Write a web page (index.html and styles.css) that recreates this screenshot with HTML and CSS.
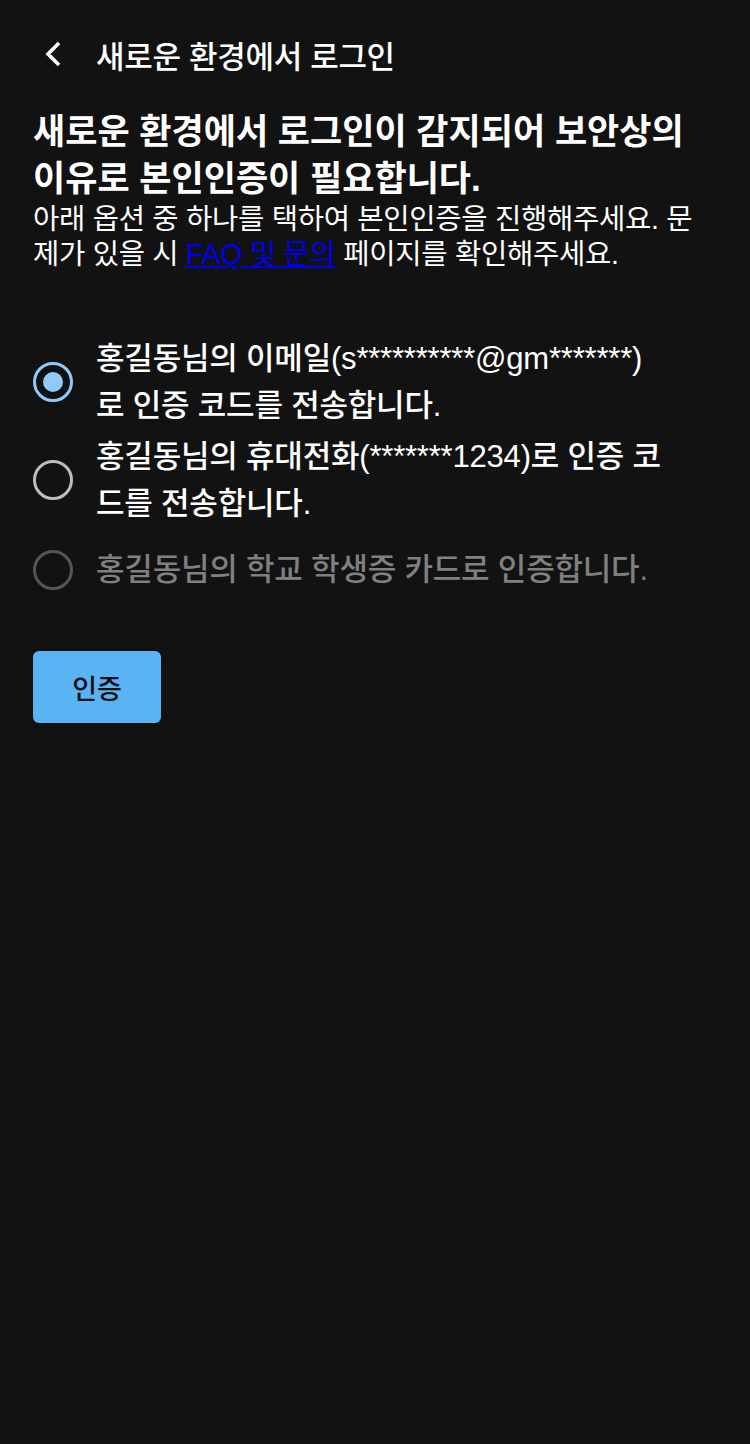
FILE: index.html
```html
<!DOCTYPE html>
<html lang="ko">
<head>
<meta charset="utf-8">
<link rel="stylesheet" href="styles.css">
</head>
<body>
<div class="page">
  <header class="topbar">
    <span class="back">
      <svg width="24" height="28" viewBox="0 0 24 28"><path d="M17 3 L6 14 L17 25" fill="none" stroke="#fff" stroke-width="3.6"/></svg>
    </span>
    <h1 class="title">새로운 환경에서 로그인</h1>
  </header>
  <main class="content">
    <h2 class="heading">새로운 환경에서 로그인이 감지되어 보안상의 이유로 본인인증이 필요합니다.</h2>
    <p class="desc">아래 옵션 중 하나를 택하여 본인인증을 진행해주세요. 문제가 있을 시 <a href="#" class="link">FAQ 및 문의</a> 페이지를 확인해주세요.</p>
    <div class="options">
      <label class="option">
        <span class="radio checked"><span class="dot"></span></span>
        <span class="label">홍길동님의 이메일(s**********@gm*******)로 인증 코드를 전송합니다.</span>
      </label>
      <label class="option">
        <span class="radio"></span>
        <span class="label">홍길동님의 휴대전화(*******1234)로 인증 코드를 전송합니다.</span>
      </label>
      <label class="option disabled">
        <span class="radio"></span>
        <span class="label">홍길동님의 학교 학생증 카드로 인증합니다.</span>
      </label>
    </div>
    <button class="btn">인증</button>
  </main>
</div>
</body>
</html>
```

FILE: styles.css
```css
html, body {
  margin: 0;
  padding: 0;
  background: #121212;
}
body {
  font-family: "Liberation Sans", "Noto Sans CJK KR", sans-serif;
  color: #fff;
  width: 750px;
  min-height: 1444px;
}
.page {
  display: flex;
  flex-direction: column;
}
.topbar {
  display: flex;
  align-items: center;
  height: 56px;
  padding: 26px 0 0 42px;
}
.back {
  display: flex;
  width: 24px;
  height: 28px;
  margin-right: 30px;
}
.title {
  margin: 0;
  font-size: 31px;
  font-weight: 500;
  letter-spacing: -0.3px;
}
.content {
  padding: 26px 33px 0 33px;
  display: flex;
  flex-direction: column;
  align-items: flex-start;
}
.heading {
  margin: 0;
  font-size: 35px;
  line-height: 47px;
  font-weight: 700;
  width: 684px;
}
.desc {
  margin: 0;
  font-size: 28.6px;
  line-height: 35px;
  letter-spacing: -0.3px;
  width: 684px;
}
.link {
  color: #0000ee;
  text-decoration: underline;
}
.options {
  display: flex;
  flex-direction: column;
  margin-top: 62px;
  width: 684px;
}
.option {
  display: flex;
  align-items: center;
  gap: 23px;
  padding: 1px 0;
}
.option + .option {
  margin-top: 2px;
}
.option.disabled {
  margin-top: 17px;
}
.radio {
  flex: none;
  box-sizing: border-box;
  width: 40px;
  height: 40px;
  border: 3px solid #bdbdbd;
  border-radius: 50%;
  display: flex;
  align-items: center;
  justify-content: center;
}
.radio.checked {
  border-color: #90caf9;
}
.dot {
  width: 20px;
  height: 20px;
  border-radius: 50%;
  background: #90caf9;
}
.label {
  width: 570px;
  font-size: 31px;
  line-height: 47px;
  font-weight: 500;
  letter-spacing: -0.2px;
}
.option.disabled .radio {
  border-color: #555;
}
.option.disabled .label {
  color: #808080;
}
.btn {
  margin-top: 57px;
  width: 128px;
  height: 72px;
  border: none;
  border-radius: 6px;
  background: #5ab3f3;
  color: #111;
  font-family: "Liberation Sans", "Noto Sans CJK KR", sans-serif;
  font-size: 27px;
  font-weight: 500;
  box-shadow: 0 3px 1px -2px rgba(0,0,0,.2), 0 2px 2px rgba(0,0,0,.14), 0 1px 5px rgba(0,0,0,.12);
}
```
